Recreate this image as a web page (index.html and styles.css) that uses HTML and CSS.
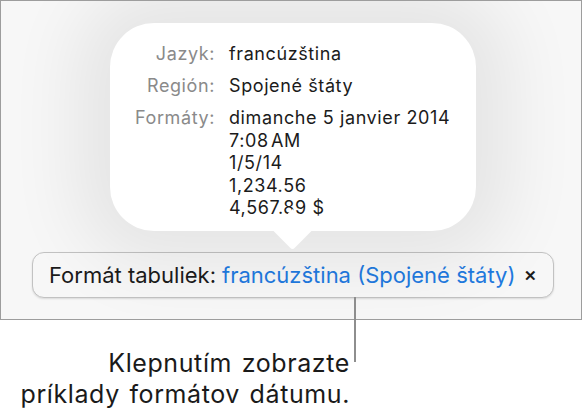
FILE: index.html
```html
<html>
    <head>
        <link rel="stylesheet" href="styles.css">
    </head>
    <body>
        <div class="screen">
            <div class="bubble">
                <div class="info">
                    <div class="label">Jazyk:</div>
                    <div class="value">francúzština</div>
                    <div class="label">Región:</div>
                    <div class="value">Spojené štáty</div>
                    <div class="label">Formáty:</div>
                    <div class="value">
                        dimanche 5 janvier 2014<br>
                        7:08&#8202;AM<br>
                        1/5/14<br>
                        1,234.56<br>
                        4,567.89 $
                    </div>
                </div>
            </div>

            <div class="format-bar">
                <span class="format-title">Formát tabuliek:</span>
                <span class="format-link">francúzština (Spojené štáty)</span>
                <span class="close">&#x2715;</span>
            </div>
        </div>

        <div class="callout">
            <div class="leader"></div>
            <p class="caption">Klepnutím zobrazte<br>príklady formátov dátumu.</p>
        </div>
    </body>
</html>
```

FILE: styles.css
```css
body {
    margin: 0;
    font-family: Inter, "Liberation Sans", sans-serif;
    color: #1b1b1b;
    background: #ffffff;
}
.screen {
    width: 580px;
    height: 318px;
    border: 1px solid #9d9d9d;
    background: #f7f7f7;
    display: flex;
    flex-direction: column;
    align-items: center;
    overflow: hidden;
}
.bubble {
    position: relative;
    margin: 22px 0 0 4px;
    width: 352px;
    height: 188px;
    padding: 20px 0 0 14px;
    background: #ffffff;
    border-radius: 44px;
    box-shadow: 0 0 70px 34px rgba(0, 0, 0, 0.075);
}
.bubble::after {
    content: "";
    position: absolute;
    left: 168px;
    bottom: -13px;
    width: 29px;
    height: 29px;
    background: #ffffff;
    transform: rotate(45deg);
    border-radius: 0 0 3px 0;
}
.info {
    display: grid;
    grid-template-columns: 91px auto;
    column-gap: 14px;
    row-gap: 9.5px;
    font-size: 18px;
    letter-spacing: 0.6px;
    line-height: 22.5px;
}
.label {
    text-align: right;
    color: #8a8a8a;
}
.format-bar {
    margin: 21px 0 0 4px;
    width: 520px;
    height: 44px;
    display: flex;
    align-items: center;
    border: 1px solid #c2c2c2;
    border-radius: 12px;
    background: #f7f7f7;
    box-shadow: 0 1px 2px rgba(0, 0, 0, 0.12);
    font-size: 22px;
}
.format-title {
    margin-left: 16px;
    margin-right: 6px;
}
.format-link {
    color: #1f7ae0;
}
.close {
    margin-left: auto;
    margin-right: 16px;
    font-size: 15px;
    font-weight: bold;
}
.callout {
    position: relative;
    width: 350px;
}
.leader {
    position: absolute;
    left: 354px;
    top: -23px;
    width: 2px;
    height: 65px;
    background: #8e8e8e;
}
.caption {
    margin: 0;
    padding-top: 28px;
    text-align: right;
    font-size: 25px;
    letter-spacing: 0.6px;
    word-spacing: 2px;
    line-height: 31px;
    color: #1a1a1a;
}
```
